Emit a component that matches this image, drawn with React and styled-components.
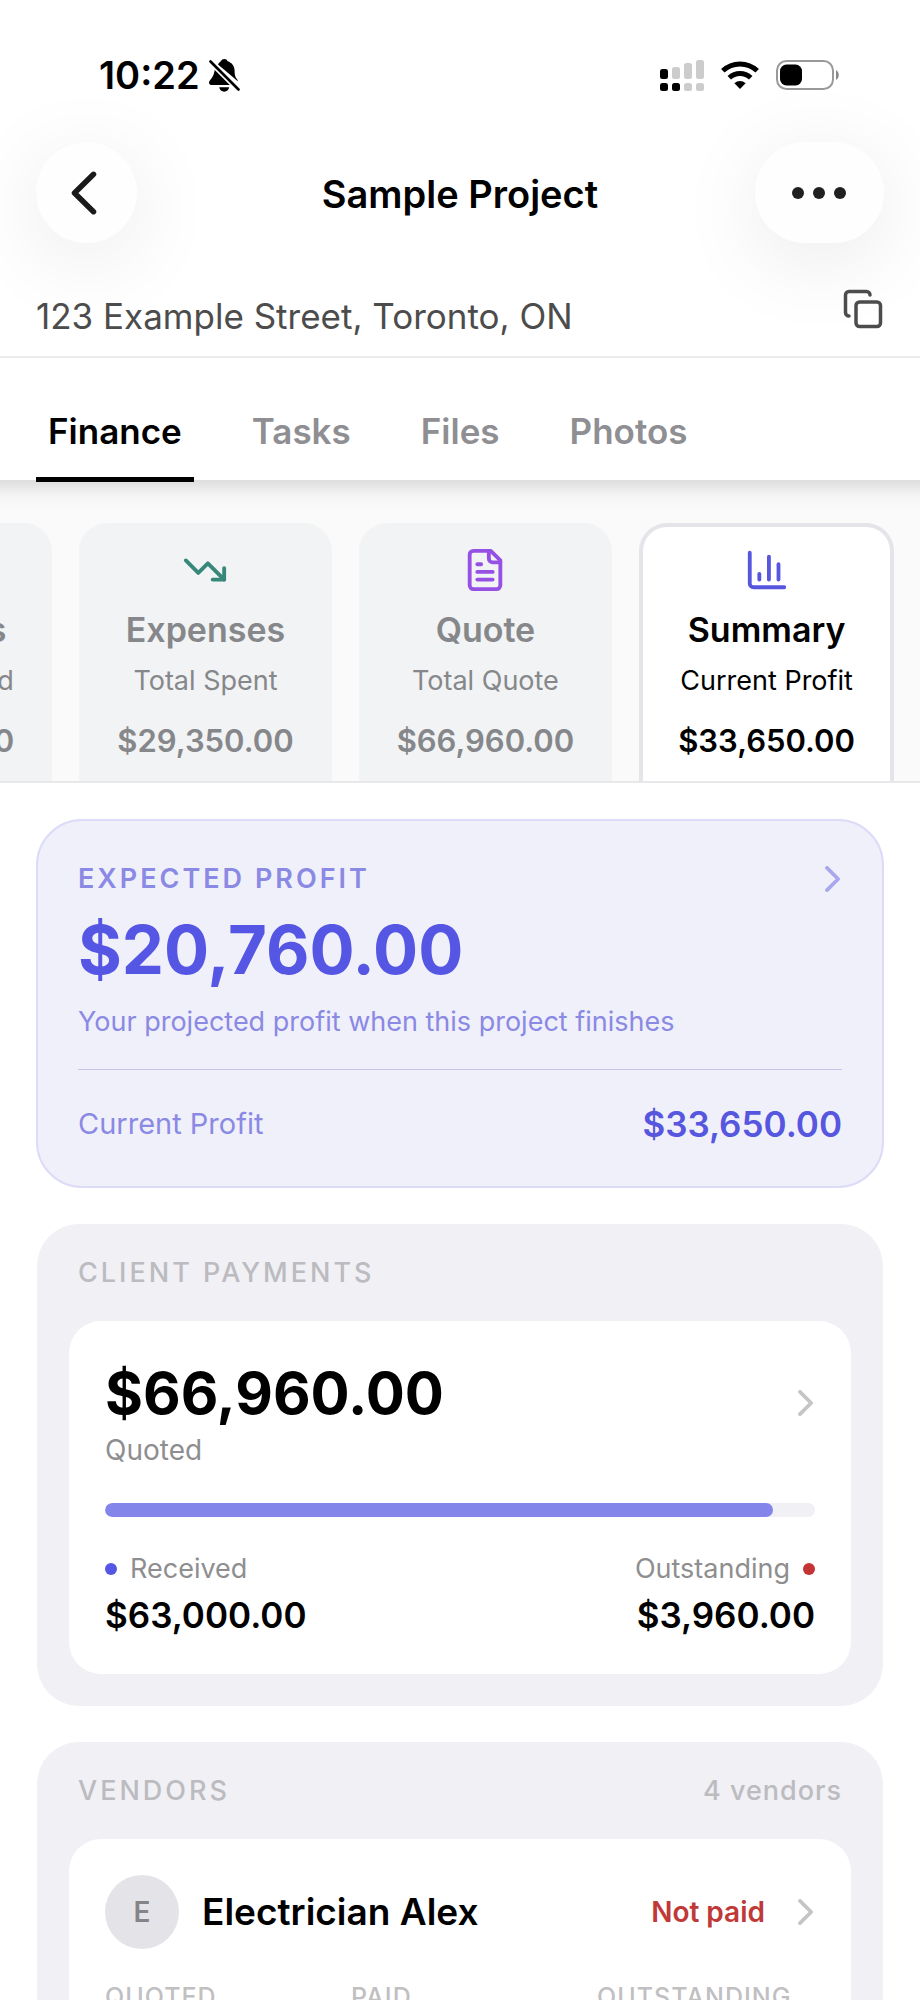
import React from "react";
import styled, { createGlobalStyle } from "styled-components";
import { ChartColumn, Copy, TrendingDown, TrendingUp } from "lucide-react";

const GlobalStyle = createGlobalStyle`
  * {
    box-sizing: border-box;
  }
  body {
    margin: 0;
    background: #ffffff;
    color: #000000;
    font-family: Inter, "Liberation Sans", sans-serif;
  }
  h1, h2, h3, p, dl, dt, dd {
    margin: 0;
    font-weight: inherit;
    font-size: inherit;
  }
  button {
    border: 0;
    padding: 0;
    background: none;
    color: inherit;
    font: inherit;
    cursor: pointer;
  }
  svg {
    display: block;
    flex-shrink: 0;
  }
`;

const Screen = styled.div`
  display: flex;
  flex-direction: column;
  height: 100vh;
  overflow: hidden;
`;

/* top area */
const Top = styled.header`
  flex-shrink: 0;
  overflow: hidden;
  border-bottom: 2px solid #ebebeb;
`;
const StatusBar = styled.div`
  display: flex;
  align-items: center;
  justify-content: space-between;
  padding: 56px 81px 48px 99px;
`;
const StatusGroup = styled.div`
  display: flex;
  align-items: center;
  gap: ${(props) => props.$gap}px;
`;
const Time = styled.span`
  font-size: 38px;
  line-height: 38px;
  font-weight: 600;
`;

const TitleRow = styled.div`
  display: grid;
  grid-template-columns: 1fr auto 1fr;
  align-items: center;
  padding: 0 36px;
`;
const RoundButton = styled.button`
  display: flex;
  align-items: center;
  justify-content: center;
  width: ${(props) => (props.$wide ? 129 : 101)}px;
  height: 101px;
  justify-self: ${(props) => (props.$wide ? "end" : "start")};
  border-radius: 51px;
  background: #fefefe;
  box-shadow: 0 16px 88px rgba(0, 0, 0, 0.09);
`;
const Title = styled.h1`
  padding-top: 3px;
  font-size: 38px;
  line-height: 48px;
  font-weight: 600;
`;

const AddressRow = styled.div`
  display: flex;
  align-items: center;
  justify-content: space-between;
  padding: 45px 36px 21px;
  color: #4c4c4c;
`;
const Address = styled.p`
  padding-top: 9px;
  font-size: 35px;
  line-height: 38px;
`;
const CopyButton = styled.button`
  align-self: flex-start;
`;

/* tabs */
const Tabs = styled.nav`
  position: relative;
  display: flex;
  flex-shrink: 0;
  gap: 46px;
  padding: 0 36px;
  background: #ffffff;
  box-shadow: 0 -14px 20px 20px rgba(0, 0, 0, 0.16);
  clip-path: inset(0 0 -30px 0);
`;
const Tab = styled.button`
  margin-bottom: -2px;
  padding: 50px 12px 23px;
  border-bottom: 5px solid ${(props) => (props.$active ? "#000000" : "transparent")};
  color: ${(props) => (props.$active ? "#000000" : "#8e8e93")};
  font-size: 35px;
  line-height: 46px;
  font-weight: 600;
`;

/* summary cards */
const Strip = styled.div`
  display: flex;
  flex-shrink: 0;
  justify-content: flex-end;
  gap: 27px;
  overflow: hidden;
  padding: 43px 26px 0;
  border-bottom: 2px solid #e8e8ea;
  background: #fafafa;
`;
const StripCard = styled.button`
  display: flex;
  flex: 0 0 auto;
  flex-direction: column;
  align-items: center;
  padding: ${(props) => (props.$active ? "20px 35px" : "24px 38px 20px")};
  border: ${(props) => (props.$active ? "4px solid #e4e4e9" : "0")};
  border-bottom: 0;
  border-radius: 28px 28px 0 0;
  background: ${(props) => (props.$active ? "#ffffff" : "#f1f3f4")};
  color: ${(props) => (props.$active ? "#000000" : "#86878a")};
`;
const StripLabel = styled.span`
  margin-top: 14px;
  font-size: 34px;
  line-height: 46px;
  font-weight: 600;
`;
const StripNote = styled.span`
  margin-top: 10px;
  font-size: 27px;
  line-height: 36px;
`;
const StripAmount = styled.span`
  margin-top: 22px;
  font-size: 31px;
  line-height: 40px;
  font-weight: 600;
`;

/* content */
const Content = styled.main`
  display: flex;
  flex: 1;
  flex-direction: column;
  gap: 36px;
  min-height: 0;
  overflow: hidden;
  padding: 36px;
`;
const ProfitCard = styled.section`
  flex-shrink: 0;
  padding: 40px;
  border: 2px solid #dddbf7;
  border-radius: 46px;
  background: #f0f0fb;
  color: #8a89e4;
`;
const Row = styled.div`
  display: flex;
  align-items: center;
  justify-content: space-between;
`;
const Overline = styled.h2`
  font-size: 27px;
  line-height: 36px;
  font-weight: ${(props) => (props.$strong ? 600 : 500)};
  letter-spacing: 3px;
`;
const ProfitAmount = styled.p`
  margin-top: 13px;
  color: #5656e5;
  font-size: 67px;
  line-height: 80px;
  font-weight: 700;
`;
const ProfitNote = styled.p`
  margin-top: 14px;
  padding-bottom: 29px;
  border-bottom: 1px solid #c5c3e8;
  font-size: 27px;
  line-height: 36px;
`;
const ProfitFooter = styled(Row)`
  padding-top: 32px;
  font-size: 29px;
  line-height: 40px;
`;
const ProfitCurrent = styled.span`
  color: #5656df;
  font-size: 35px;
  line-height: 44px;
  font-weight: 600;
`;

const Group = styled.section`
  flex-shrink: 0;
  margin: 0 1px;
  padding: 31px 32px 32px;
  border-radius: 42px;
  background: #f0f0f5;
`;
const GroupHeader = styled(Row)`
  padding: 0 9px 30px;
  color: #bbbbc0;
`;
const GroupCount = styled.span`
  font-size: 27px;
  line-height: 36px;
  font-weight: 500;
  letter-spacing: 1px;
`;
const Panel = styled.div`
  padding: 36px;
  border-radius: 32px;
  background: #ffffff;
`;
const QuotedRow = styled(Row)`
  align-items: flex-start;
`;
const ChevronSlot = styled.span`
  display: flex;
  align-items: center;
  height: 92px;
`;
const Quoted = styled.p`
  font-size: 58px;
  line-height: 72px;
  font-weight: 700;
`;
const Caption = styled.p`
  margin-top: 3px;
  color: #8e8e90;
  font-size: 28px;
  line-height: 36px;
`;
const Progress = styled.div`
  height: 14px;
  margin-top: 35px;
  overflow: hidden;
  border-radius: 7px;
  background: #f0f0f5;
`;
const ProgressFill = styled.div`
  height: 100%;
  border-radius: 7px;
  background: #8385ea;
`;
const Stats = styled.dl`
  display: flex;
  justify-content: space-between;
  margin-top: 35px;
`;
const StatLabel = styled.dt`
  display: flex;
  flex-direction: ${(props) => (props.$end ? "row-reverse" : "row")};
  align-items: center;
  gap: 13px;
  color: #8e8e90;
  font-size: 27px;
  line-height: 34px;
`;
const Dot = styled.span`
  width: 12px;
  height: 12px;
  border-radius: 50%;
  background: ${(props) => props.$color};
`;
const StatValue = styled.dd`
  margin-top: 6px;
  font-size: 35px;
  line-height: 46px;
  font-weight: 600;
  text-align: ${(props) => (props.$end ? "right" : "left")};
`;

const VendorRow = styled.button`
  display: flex;
  align-items: center;
  width: 100%;
  text-align: left;
`;
const Avatar = styled.span`
  display: flex;
  align-items: center;
  justify-content: center;
  width: 74px;
  height: 74px;
  border-radius: 50%;
  background: #e4e4e8;
  color: #858589;
  font-size: 28px;
  font-weight: 600;
`;
const VendorName = styled.span`
  flex: 1;
  padding-left: 23px;
  font-size: 37px;
  line-height: 48px;
  font-weight: 600;
`;
const VendorStatus = styled.span`
  padding-right: 33px;
  color: #bf3939;
  font-size: 28px;
  line-height: 36px;
  font-weight: 600;
`;
const VendorColumns = styled.div`
  display: grid;
  grid-template-columns: repeat(3, 1fr);
  gap: 28px;
  margin-top: 31px;
  color: #c0c0c2;
  font-size: 25px;
  line-height: 34px;
  font-weight: 500;
  letter-spacing: 1px;
`;

const BellOff = () => (
  <svg width="31" height="33" viewBox="0 0 31 33">
    <path
      fill="#000"
      d="M9 5.500C10.400 3.200 11.200 2.600 12 2.200C12.600 0.900 13.800 0 15.300 0s2.700.9 3.300 2.200c4.200 1.400 7 4.800 7 9.300 0 4.600.6 6.600 2.600 9 .5.600.6 1 .6 1.800zM6 9.800 22.400 26H2.500C.9 26 0 25 0 23.800c0-1.600 1-2.400 2.800-4.800C4.600 16.600 5.200 14 6 9.800zM10.200 28.300h10c-.4 2.600-2.500 4.400-5 4.400s-4.600-1.800-5-4.400z"
    />
    <path d="M1.500 2.500 29.500 30.500" stroke="#fff" strokeWidth="6" />
    <path d="M1.500 2.500 29.500 30.500" stroke="#000" strokeWidth="2.600" strokeLinecap="round" />
  </svg>
);

const bars = [
  { x: 0, y: 9, top: "#000", dot: "#000" },
  { x: 12, y: 7, top: "#ccc", dot: "#000" },
  { x: 24, y: 3, top: "#ccc", dot: "#ccc" },
  { x: 36, y: 0, top: "#ccc", dot: "#ccc" },
];

const Signal = () => (
  <svg width="44" height="31" viewBox="0 0 44 31">
    {bars.map((bar) => (
      <g key={bar.x}>
        <rect x={bar.x} y={bar.y} width="8" height={19 - bar.y} rx="2.500" fill={bar.top} />
        <rect x={bar.x} y="23" width="8" height="8" rx="2.500" fill={bar.dot} />
      </g>
    ))}
  </svg>
);

const Wifi = () => (
  <svg width="38" height="28" viewBox="0 0 38 28" fill="none" stroke="#000">
    <path d="M1.800 9.800A25 25 0 0 1 36.200 9.800" strokeWidth="5" />
    <path d="M8.300 16.700A15.500 15.500 0 0 1 29.700 16.700" strokeWidth="5" />
    <path d="M19 28 13.400 22.200A8.200 8.200 0 0 1 24.600 22.200Z" fill="#000" stroke="none" />
  </svg>
);

const Battery = () => (
  <svg width="63" height="30" viewBox="0 0 63 30">
    <rect x="1" y="1" width="56" height="28" rx="9.500" fill="none" stroke="#999" strokeWidth="2" />
    <rect x="4" y="4.500" width="22" height="21" rx="6.500" fill="#000" />
    <path d="M60 10v10c3.700-2 3.700-8 0-10z" fill="#888" />
  </svg>
);

const Back = () => (
  <svg width="32" height="44" viewBox="0 0 32 44" fill="none">
    <path
      d="M22.500 3.300 3.500 22 22.500 40.700"
      stroke="#1a1a1a"
      strokeWidth="5.500"
      strokeLinecap="round"
      strokeLinejoin="round"
    />
  </svg>
);

const More = () => (
  <svg width="58" height="12" viewBox="0 0 58 12" fill="#202020">
    <circle cx="7" cy="6" r="6" />
    <circle cx="28" cy="6" r="6" />
    <circle cx="49" cy="6" r="6" />
  </svg>
);

const Chevron = ({ color = "#c5c5c7" }) => (
  <svg width="17" height="26" viewBox="8 5 9 14" fill="none" stroke={color} strokeWidth="2">
    <path d="m9 18 6-6-6-6" strokeLinecap="round" strokeLinejoin="round" />
  </svg>
);

const FileIcon = ({ size, color }) => (
  <svg
    width={size}
    height={size}
    viewBox="0 0 24 24"
    fill="none"
    stroke={color}
    strokeWidth="2"
    strokeLinecap="round"
    strokeLinejoin="round"
  >
    <path d="M15 2H6a2 2 0 0 0-2 2v16a2 2 0 0 0 2 2h12a2 2 0 0 0 2-2V7Z" />
    <path d="M14 2v4a2 2 0 0 0 2 2h4" />
    <path d="M10 9H8M16 13H8M16 17H8" />
  </svg>
);

const tabs = ["Finance", "Tasks", "Files", "Photos"];

const cards = [
  { label: "Payments", note: "Total Invoiced", amount: "$63,000.00", icon: TrendingUp, color: "#37877b" },
  { label: "Expenses", note: "Total Spent", amount: "$29,350.00", icon: TrendingDown, color: "#37877b" },
  { label: "Quote", note: "Total Quote", amount: "$66,960.00", icon: FileIcon, color: "#9650e4" },
  { label: "Summary", note: "Current Profit", amount: "$33,650.00", icon: ChartColumn, color: "#5656df", active: true },
];

const quoted = 66960;
const received = 63000;

const App = () => {
  return (
    <Screen>
      <GlobalStyle />
      <Top>
        <StatusBar>
          <StatusGroup $gap={9}>
            <Time>10:22</Time>
            <BellOff />
          </StatusGroup>
          <StatusGroup $gap={17}>
            <Signal />
            <Wifi />
            <Battery />
          </StatusGroup>
        </StatusBar>
        <TitleRow>
          <RoundButton aria-label="Back">
            <Back />
          </RoundButton>
          <Title>Sample Project</Title>
          <RoundButton $wide aria-label="More">
            <More />
          </RoundButton>
        </TitleRow>
        <AddressRow>
          <Address>123 Example Street, Toronto, ON</Address>
          <CopyButton aria-label="Copy address">
            <Copy size={42} />
          </CopyButton>
        </AddressRow>
      </Top>

      <Tabs>
        {tabs.map((tab) => (
          <Tab key={tab} $active={tab === "Finance"}>
            {tab}
          </Tab>
        ))}
      </Tabs>

      <Strip>
        {cards.map((card) => (
          <StripCard key={card.label} $active={card.active}>
            <card.icon size={46} color={card.color} />
            <StripLabel>{card.label}</StripLabel>
            <StripNote>{card.note}</StripNote>
            <StripAmount>{card.amount}</StripAmount>
          </StripCard>
        ))}
      </Strip>

      <Content>
        <ProfitCard>
          <Row>
            <Overline $strong>EXPECTED PROFIT</Overline>
            <Chevron color="#a9a8ec" />
          </Row>
          <ProfitAmount>$20,760.00</ProfitAmount>
          <ProfitNote>Your projected profit when this project finishes</ProfitNote>
          <ProfitFooter>
            <span>Current Profit</span>
            <ProfitCurrent>$33,650.00</ProfitCurrent>
          </ProfitFooter>
        </ProfitCard>

        <Group>
          <GroupHeader>
            <Overline>CLIENT PAYMENTS</Overline>
          </GroupHeader>
          <Panel>
            <QuotedRow>
              <div>
                <Quoted>$66,960.00</Quoted>
                <Caption>Quoted</Caption>
              </div>
              <ChevronSlot>
                <Chevron />
              </ChevronSlot>
            </QuotedRow>
            <Progress>
              <ProgressFill style={{ width: `${(received / quoted) * 100}%` }} />
            </Progress>
            <Stats>
              <div>
                <StatLabel>
                  <Dot $color="#5656e5" />
                  Received
                </StatLabel>
                <StatValue>$63,000.00</StatValue>
              </div>
              <div>
                <StatLabel $end>
                  <Dot $color="#c53434" />
                  Outstanding
                </StatLabel>
                <StatValue $end>$3,960.00</StatValue>
              </div>
            </Stats>
          </Panel>
        </Group>

        <Group>
          <GroupHeader>
            <Overline>VENDORS</Overline>
            <GroupCount>4 vendors</GroupCount>
          </GroupHeader>
          <Panel>
            <VendorRow>
              <Avatar>E</Avatar>
              <VendorName>Electrician Alex</VendorName>
              <VendorStatus>Not paid</VendorStatus>
              <Chevron />
            </VendorRow>
            <VendorColumns>
              <span>QUOTED</span>
              <span>PAID</span>
              <span>OUTSTANDING</span>
            </VendorColumns>
          </Panel>
        </Group>
      </Content>
    </Screen>
  );
};

export default App;
